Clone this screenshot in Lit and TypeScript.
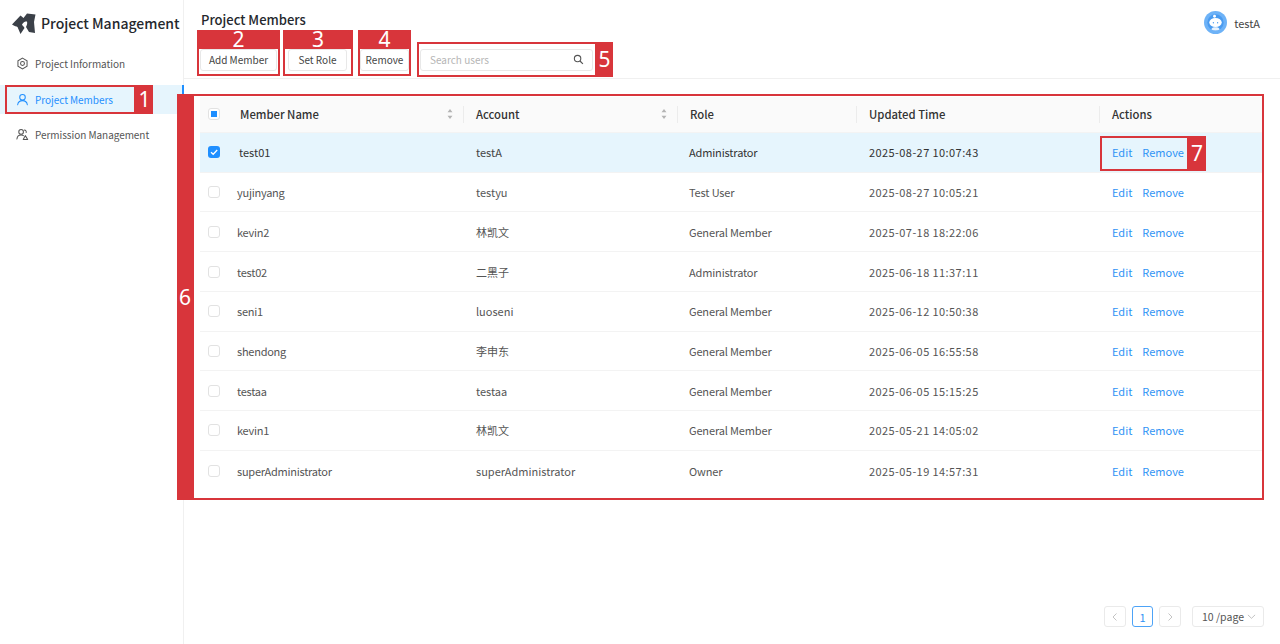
import { LitElement, html, css, svg } from 'lit';
import { customElement } from 'lit/decorators.js';

const members = [
  ['test01', 'testA', 'Administrator', '2025-08-27 10:07:43'],
  ['yujinyang', 'testyu', 'Test User', '2025-08-27 10:05:21'],
  ['kevin2', '林凯文', 'General Member', '2025-07-18 18:22:06'],
  ['test02', '二黑子', 'Administrator', '2025-06-18 11:37:11'],
  ['seni1', 'luoseni', 'General Member', '2025-06-12 10:50:38'],
  ['shendong', '李申东', 'General Member', '2025-06-05 16:55:58'],
  ['testaa', 'testaa', 'General Member', '2025-06-05 15:15:25'],
  ['kevin1', '林凯文', 'General Member', '2025-05-21 14:05:02'],
  ['superAdministrator', 'superAdministrator', 'Owner', '2025-05-19 14:57:31'],
];

const sortIcon = html`<svg class="sort" viewBox="0 0 8 12" width="8" height="12">
  <path d="M4 1 6.500 4.200h-5zM4 11 1.500 7.800h5z" fill="#b4b4b4"></path>
</svg>`;

const gearIcon = svg`<path d="M7 1.200 11.900 4v6L7 12.800 2.100 10V4z" fill="none" stroke="currentColor" stroke-width="1.100"></path>
  <circle cx="7" cy="7" r="2.100" fill="none" stroke="currentColor" stroke-width="1.100"></circle>`;
const userIcon = svg`<circle cx="7" cy="4.600" r="3" fill="none" stroke="currentColor" stroke-width="1.100"></circle>
  <path d="M1.800 12.700c.4-2.900 2.500-4.500 5.200-4.500s4.800 1.600 5.200 4.500" fill="none" stroke="currentColor" stroke-width="1.100" stroke-linecap="round"></path>`;
const roleIcon = svg`<circle cx="5.500" cy="4.200" r="2.500" fill="none" stroke="currentColor" stroke-width="1.100"></circle>
  <path d="M1 11.800c.3-2.800 2-4.200 4.500-4.200 1 0 1.800.2 2.500.7M7.800 12.500l2.200-4.300 2.600 4.300zM9 2.200c1.500.1 2.200 1.200 2 2.600" fill="none" stroke="currentColor" stroke-width="1.100" stroke-linecap="round" stroke-linejoin="round"></path>`;

@customElement('app-root')
export class AppRoot extends LitElement {
  static styles = css`
    :host {
      display: block;
      position: relative;
      width: 1280px;
      height: 644px;
      overflow: hidden;
      background: #fff;
      color: #333;
      font-family: 'Noto Sans CJK SC', 'Noto Sans', sans-serif;
      font-size: 11px;
      white-space: nowrap;
    }

    .layout {
      display: flex;
      height: 100%;
    }

    /* sidebar */
    .sidebar {
      flex: 0 0 184px;
      min-width: 0;
      border-right: 1px solid #f0f0f0;
      box-sizing: border-box;
    }
    .brand {
      display: flex;
      align-items: center;
      gap: 5px;
      height: 46px;
      padding-left: 12px;
      color: #25282d;
      font-size: 14px;
      font-weight: 500;
    }
    .nav {
      display: flex;
      flex-direction: column;
      margin-top: 3px;
      gap: 6px;
    }
    .nav-item {
      display: flex;
      align-items: center;
      gap: 6px;
      height: 29.5px;
      padding-left: 16px;
      color: #555;
      font-size: 10px;
      letter-spacing: -0.05px;
    }
    .nav-item svg {
      flex: none;
    }
    .nav-item.active {
      margin-right: -1px;
      color: #1f8fff;
      background: #e6f5fd;
      box-shadow: inset -2px 0 0 #1f8fff;
    }

    /* main column */
    .main {
      flex: 1;
      display: flex;
      flex-direction: column;
      min-width: 0;
    }
    .header {
      position: relative;
      height: 79px;
      box-sizing: border-box;
      padding: 12px 0 0 17px;
      border-bottom: 1px solid #f0f0f0;
    }
    h1 {
      margin: 0;
      color: #25282d;
      font-size: 13px;
      line-height: 15px;
      font-weight: 500;
    }
    .toolbar {
      display: flex;
      margin: 22px 0 0 -1px;
    }
    .btn {
      display: flex;
      align-items: center;
      justify-content: center;
      box-sizing: border-box;
      height: 22px;
      border: 1px solid #e8e8e8;
      border-radius: 3px;
      background: #fff;
      color: #444;
      font: inherit;
      font-size: 10px;
      padding: 0 0 2px;
    }
    .btn-add {
      width: 77px;
      margin-right: 11px;
    }
    .btn-role {
      width: 59px;
      margin-right: 13px;
    }
    .btn-remove {
      width: 49px;
      margin-right: 11px;
    }
    .search {
      display: flex;
      align-items: center;
      justify-content: space-between;
      box-sizing: border-box;
      width: 173px;
      height: 22px;
      padding: 0 8px 2px 9px;
      border: 1px solid #e8e8e8;
      border-radius: 3px;
      color: #b5b5b5;
      font-size: 10px;
    }
    .profile {
      position: absolute;
      top: 11px;
      right: 20px;
      display: flex;
      align-items: center;
      gap: 7px;
      color: #444;
    }

    /* table */
    .table {
      display: grid;
      grid-template-columns: 29px 235px 214px 179px 243px 162px;
      grid-template-rows: 36px;
      grid-auto-rows: 39.72px;
      width: 1062px;
      margin: 18px 0 0 16px;
    }
    .row {
      display: contents;
    }
    .cell {
      display: flex;
      align-items: center;
      border-bottom: 1px solid #f3f3f3;
      padding-left: 12px;
      min-width: 0;
      color: #555;
    }
    .row:last-child .cell {
      border-bottom: 0;
    }
    .cell.check {
      padding-left: 8px;
    }
    .cell.name {
      padding-left: 8px;
      letter-spacing: -0.25px;
    }
    .cell.time {
      letter-spacing: 0.42px;
    }
    .row.head .cell {
      position: relative;
      box-sizing: border-box;
      padding-bottom: 2px;
      background: #fafafa;
      color: #333;
      font-size: 11.3px;
      font-weight: 500;
      letter-spacing: 0;
    }
    .row.head .cell.name {
      padding-left: 11px;
      justify-content: space-between;
      padding-right: 10px;
    }
    .row.head .sorted {
      justify-content: space-between;
      padding-right: 10px;
    }
    .row.head .cell.sep::after {
      content: '';
      position: absolute;
      left: -1px;
      top: 9px;
      bottom: 9px;
      width: 1px;
      background: #ececec;
    }
    .row.selected .cell {
      background: #e6f5fd;
      color: #444;
    }
    .row.selected .cell.name {
      padding-left: 10px;
      letter-spacing: 0;
    }
    .row.selected .cell.name,
    .row.selected .cell.role,
    .row.selected .cell.time {
      color: #333;
    }
    .role {
      padding-left: 11px;
      letter-spacing: -0.15px;
    }
    .box {
      box-sizing: border-box;
      display: flex;
      align-items: center;
      justify-content: center;
      width: 12px;
      height: 12px;
      border: 1px solid #e2e2e2;
      border-radius: 3px;
      background: #fff;
    }
    .box.checked {
      border: 0;
      background: #1f8fff;
    }
    .box i {
      width: 6px;
      height: 6px;
      background: #1f8fff;
    }
    .link {
      color: #2f93f5;
      margin-right: 10px;
    }

    /* pagination */
    .pager {
      display: flex;
      align-items: center;
      margin-top: auto;
      margin-bottom: 17px;
      margin-left: 920px;
    }
    .page {
      display: flex;
      align-items: center;
      justify-content: center;
      box-sizing: border-box;
      width: 22px;
      height: 21px;
      border: 1px solid #eaeaea;
      border-radius: 3px;
      color: #c4c4c4;
    }
    .page.current {
      width: 21px;
      margin: 0 6px;
      border-color: #4da3f7;
      color: #2f93f5;
    }
    .size {
      display: flex;
      align-items: center;
      justify-content: space-between;
      box-sizing: border-box;
      width: 72px;
      height: 21px;
      margin-left: 11px;
      padding: 0 7px 0 9px;
      border: 1px solid #eaeaea;
      border-radius: 3px;
      color: #555;
      font-size: 10.500px;
    }

    /* red annotation overlays */
    .mark {
      position: absolute;
      box-sizing: border-box;
      border: 2px solid #d8353b;
    }
    .tag {
      position: absolute;
      display: flex;
      align-items: center;
      justify-content: center;
      background: #d8353b;
      color: #fff;
      font-family: 'Noto Sans', sans-serif;
      font-size: 21px;
      line-height: 1;
    }
    .m1 { left: 5px; top: 85px; width: 131px; height: 29px; }
    .t1 { left: 136px; top: 85px; width: 17px; height: 29px; }
    .m2 { left: 197px; top: 30px; width: 83px; height: 46px; }
    .t2 { left: 197px; top: 30px; width: 83px; height: 19px; }
    .m3 { left: 283px; top: 30px; width: 70px; height: 46px; }
    .t3 { left: 283px; top: 30px; width: 70px; height: 19px; }
    .m4 { left: 358px; top: 30px; width: 53px; height: 46px; }
    .t4 { left: 358px; top: 30px; width: 53px; height: 19px; }
    .m5 { left: 417px; top: 42px; width: 180px; height: 35px; }
    .t5 { left: 596px; top: 42px; width: 17px; height: 35px; }
    .m6 { left: 192px; top: 94px; width: 1072px; height: 406px; }
    .t6 { left: 177px; top: 94px; width: 16px; height: 406px; }
    .m7 { left: 1100px; top: 136px; width: 89px; height: 35px; }
    .t7 { left: 1188px; top: 136px; width: 18px; height: 35px; }
  `;

  private navItem(label: string, icon: unknown, active = false) {
    return html`<div class="nav-item ${active ? 'active' : ''}">
      <svg viewBox="0 0 14 14" width="13" height="13">${icon}</svg>
      <span>${label}</span>
    </div>`;
  }

  private row(m: string[], i: number) {
    const selected = i === 0;
    return html`<div class="row ${selected ? 'selected' : ''}">
      <div class="cell check">
        <span class="box ${selected ? 'checked' : ''}">
          ${selected
            ? html`<svg viewBox="0 0 12 12" width="12" height="12">
                <path d="M3 6.200 5.200 8.300 9.200 4" fill="none" stroke="#fff" stroke-width="1.300"></path>
              </svg>`
            : ''}
        </span>
      </div>
      <div class="cell name">${m[0]}</div>
      <div class="cell">${m[1]}</div>
      <div class="cell role">${m[2]}</div>
      <div class="cell time">${m[3]}</div>
      <div class="cell"><span class="link">Edit</span><span class="link">Remove</span></div>
    </div>`;
  }

  render() {
    return html`
      <div class="layout">
        <aside class="sidebar">
          <div class="brand">
            <svg viewBox="0 0 24 21" width="24" height="21">
              <path
                d="M0 11.500 8.500 2.500 11.500 5 15 .5 23.500 1.500 22 9 23 20 17 19 14 14c1-2 1.500-3.500 1-5.500-2 0-3.500 .5-5 3 .5 1.500 2 2 2.500 3.500L8.500 21 5.500 14c-1-.5-3-1-5.500-2.500z"
                fill="#3b4048"
              ></path>
            </svg>
            <span>Project Management</span>
          </div>
          <nav class="nav">
            ${this.navItem('Project Information', gearIcon)}
            ${this.navItem('Project Members', userIcon, true)}
            ${this.navItem('Permission Management', roleIcon)}
          </nav>
        </aside>
        <main class="main">
          <header class="header">
            <h1>Project Members</h1>
            <div class="toolbar">
              <button class="btn btn-add">Add Member</button>
              <button class="btn btn-role">Set Role</button>
              <button class="btn btn-remove">Remove</button>
              <div class="search">
                <span>Search users</span>
                <svg viewBox="0 0 12 12" width="11" height="11">
                  <circle cx="5" cy="5" r="3.500" fill="none" stroke="#555" stroke-width="1.200"></circle>
                  <path d="M7.600 7.600 10.800 10.800" stroke="#555" stroke-width="1.300"></path>
                </svg>
              </div>
            </div>
            <div class="profile">
              <svg viewBox="0 0 24 24" width="23" height="23">
                <circle cx="12" cy="12" r="12" fill="#6db2f7"></circle>
                <circle cx="12" cy="12" r="8.500" fill="#4a9bf0"></circle>
                <ellipse cx="12" cy="12" rx="6.500" ry="4.800" fill="#fff"></ellipse>
                <path d="M8 18.500c1-2 7-2 8 0v1c-2 1-6 1-8 0z" fill="#e8f3fe"></path>
                <circle cx="11" cy="5.500" r="1.500" fill="#fff"></circle>
                <circle cx="9.800" cy="12.300" r=".7" fill="#4a9bf0"></circle>
                <circle cx="14.200" cy="12.300" r=".7" fill="#4a9bf0"></circle>
              </svg>
              <span>testA</span>
            </div>
          </header>

          <div class="table">
            <div class="row head">
              <div class="cell check"><span class="box"><i></i></span></div>
              <div class="cell name"><span>Member Name</span>${sortIcon}</div>
              <div class="cell sep sorted"><span>Account</span>${sortIcon}</div>
              <div class="cell sep">Role</div>
              <div class="cell sep">Updated Time</div>
              <div class="cell sep">Actions</div>
            </div>
            ${members.map((m, i) => this.row(m, i))}
          </div>

          <div class="pager">
            <div class="page">
              <svg viewBox="0 0 10 10" width="10" height="10"><path d="M6.500 1.500 3 5l3.500 3.500" fill="none" stroke="currentColor"></path></svg>
            </div>
            <div class="page current">1</div>
            <div class="page">
              <svg viewBox="0 0 10 10" width="10" height="10"><path d="M3.500 1.500 7 5 3.500 8.500" fill="none" stroke="currentColor"></path></svg>
            </div>
            <div class="size">
              <span>10 /page</span>
              <svg viewBox="0 0 10 10" width="9" height="9"><path d="M1 3.200 5 7l4-3.800" fill="none" stroke="#bbb"></path></svg>
            </div>
          </div>
        </main>
      </div>

      <div class="mark m1"></div><div class="tag t1">1</div>
      <div class="mark m2"></div><div class="tag t2">2</div>
      <div class="mark m3"></div><div class="tag t3">3</div>
      <div class="mark m4"></div><div class="tag t4">4</div>
      <div class="mark m5"></div><div class="tag t5">5</div>
      <div class="mark m6"></div><div class="tag t6">6</div>
      <div class="mark m7"></div><div class="tag t7">7</div>
    `;
  }
}
